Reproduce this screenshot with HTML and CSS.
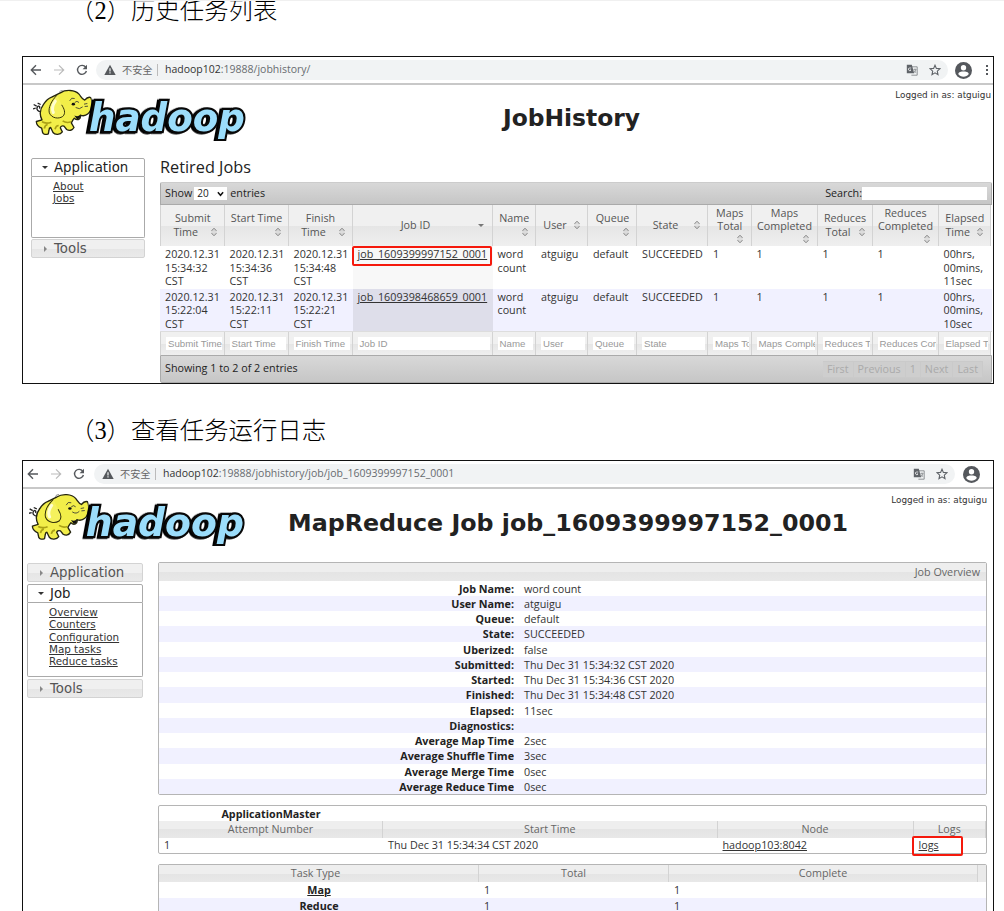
FILE: index.html
```html
<!DOCTYPE html>
<html lang="zh-CN">
<head>
<meta charset="utf-8">
<title>JobHistory</title>
<link rel="stylesheet" href="styles.css">
</head>
<body>
<svg class="defs" width="0" height="0">
  <symbol id="back" viewBox="0 0 12 12"><path d="M11 6H1.5M6 1.3L1.3 6L6 10.7" fill="none" stroke="currentColor" stroke-width="1.4"/></symbol>
  <symbol id="fwd" viewBox="0 0 12 12"><path d="M1 6h9.5M6 1.3L10.7 6L6 10.7" fill="none" stroke="currentColor" stroke-width="1.2"/></symbol>
  <symbol id="reload" viewBox="0 0 12 12"><path d="M9.7 3.2A4.5 4.5 0 1 0 10.4 7" fill="none" stroke="currentColor" stroke-width="1.4"/><path d="M11 .8v4.4H6.6z" fill="currentColor"/></symbol>
  <symbol id="warn" viewBox="0 0 12 12"><path d="M6 .8L11.7 11H.3z" fill="#55585c"/><path d="M6 4.2v3.2M6 8.3v1.3" stroke="#f1f3f4" stroke-width="1.2"/></symbol>
  <symbol id="translate" viewBox="0 0 12 12"><path d="M5 2.8h6.2v8.4H5.4" fill="#f1f3f4" stroke="#777b80" stroke-width=".8"/><path d="M.8.8h5l2.4 8.4H.8z" fill="#5f6368"/><path d="M5.2 4H3.2a1.4 1.4 0 1 0 1.8 2H3.9" fill="none" stroke="#f1f3f4" stroke-width=".8"/><path d="M7.4 5.4h3M9 4.6v.8M10 5.6C9.7 7 8.9 8 7.9 8.6M8 6.4c.4 1 1.3 1.8 2.2 2.3" fill="none" stroke="#777b80" stroke-width=".7"/></symbol>
  <symbol id="star" viewBox="0 0 12 12"><path d="M6 1.2L7.4 4.4L10.9 4.8L8.3 7.1L9 10.6L6 8.8L3 10.6L3.7 7.1L1.1 4.8L4.6 4.4z" fill="none" stroke="#5f6368" stroke-width="1.1"/></symbol>
  <symbol id="user" viewBox="0 0 16 16"><circle cx="8" cy="8" r="8" fill="#55585d"/><circle cx="8" cy="5.4" r="2.5" fill="#fff"/><path d="M3 11.4C3.3 9.3 6 8.9 8 8.9S12.700 9.300 13 11.400C11.700 13.200 10 13.900 8 13.900S4.200 13.200 3 11.400z" fill="#fff"/></symbol>
  <symbol id="sort" viewBox="0 0 8 10"><path d="M1.600 3.800L4 1.300L6.400 3.800M1.600 6.200L4 8.700L6.400 6.200" fill="none" stroke="#777" stroke-width="1"/><path d="M1.200 3.900h5.600M1.200 6.100h5.600" stroke="#aaa" stroke-width=".5"/></symbol>
  <symbol id="elephant" viewBox="39 267 176 140">
    <path d="M66 334C55 336 48 328 52 321C55 314 62 320 58 325M50 318L41 313M47 324L39 326M62 313L53 309" fill="none" stroke="#222" stroke-width="4"/>
    <path d="M117 277Q122 270 128 271" fill="none" stroke="#999" stroke-width="3"/>
    <path d="M95 291C105 285 113 282 121 278C138 267 165 269 177 282C183 289 186 297 194 300C199 294 204 289 212 292C220 306 215 333 204 341C196 348 186 347 181 345C184 357 172 363 163 354C158 360 157 363 154 368L162 382C157 391 148 393 140 388L132 378C125 376 122 379 121 383L127 395C121 404 105 405 99 397L92 382C88 383 87 386 87 390L85 401C78 404 70 403 68 398L65 384C55 380 49 371 49 364L66 359C57 342 61 325 71 312C78 301 85 295 95 291Z" fill="#f2ee49" stroke="#252510" stroke-width="4" stroke-linejoin="round"/>
    <path d="M111 285C94 302 84 323 88 338C95 355 116 357 128 349C139 339 132 325 125 314" fill="#f5f15d" stroke="#34320a" stroke-width="3"/>
    <path d="M106 303C95 319 96 329 100 337" fill="none" stroke="#fffed0" stroke-width="9" stroke-linecap="round"/>
    <path d="M149 302Q154 290 164 295M164 307Q171 300 177 307M167 322Q179 330 188 320M192 312L202 310M194 319L204 318" fill="none" stroke="#333" stroke-width="2.500"/>
    <ellipse cx="160" cy="312" rx="5" ry="4" fill="#111"/><path d="M163 346Q174 351 181 344Q181 358 171 357z" fill="#111"/>
    <path d="M66 365Q78 372 94 366M128 362Q139 370 153 365M73 385Q75 374 83 373M105 387Q108 376 116 376" fill="none" stroke="#aaa016" stroke-width="5"/>
  </symbol>
</svg>

<h2 class="caption first">（2）历史任务列表</h2>

<section class="frame one">
  <div class="toolbar">
    <svg class="i12"><use href="#back"/></svg><svg class="i12 dim"><use href="#fwd"/></svg><svg class="i12"><use href="#reload"/></svg>
    <div class="omni"><svg class="i12"><use href="#warn"/></svg><span class="unsafe">不安全</span><i class="bar"></i><span class="url"><b>hadoop102</b>:19888/jobhistory/</span><svg class="i12 tr"><use href="#translate"/></svg><svg class="i12"><use href="#star"/></svg></div>
    <svg class="i16"><use href="#user"/></svg><span class="dots"><i></i><i></i><i></i></span>
  </div>
  <header class="head">
    <svg class="logo" viewBox="39 267 642 155"><use href="#elephant" x="39" y="267" width="176" height="140"/><text x="207" y="392" textLength="468" lengthAdjust="spacingAndGlyphs">hadoop</text></svg>
    <h1>JobHistory</h1>
    <span class="login">Logged in as: atguigu</span>
  </header>
  <div class="body">
    <nav>
      <h3 class="open"><i></i>Application</h3>
      <div class="links"><a>About</a><a>Jobs</a></div>
      <h3><i></i>Tools</h3>
    </nav>
    <main>
      <h4>Retired Jobs</h4>
      <div class="tbar top"><span>Show</span><span class="select">20<svg viewBox="0 0 8 6"><path d="M1 1L4 4.500L7 1" fill="none" stroke="#111" stroke-width="1.700"/></svg></span><span>entries</span><span class="search">Search:</span><input class="q"></div>
      <div class="cols thead">
        <div>Submit<p><span>Time</span><svg><use href="#sort"/></svg></p></div>
        <div>Start Time<p><svg><use href="#sort"/></svg></p></div>
        <div>Finish<p><span>Time</span><svg><use href="#sort"/></svg></p></div>
        <div><p class="wide"><span>Job ID</span><i class="down"></i></p></div>
        <div class="n">Name<p><svg><use href="#sort"/></svg></p></div>
        <div class="one-line"><p><span>User</span><svg><use href="#sort"/></svg></p></div>
        <div>Queue<p><svg><use href="#sort"/></svg></p></div>
        <div class="one-line"><p><span>State</span><svg><use href="#sort"/></svg></p></div>
        <div class="three">Maps<br>Total<p><svg><use href="#sort"/></svg></p></div>
        <div class="three">Maps<br>Completed<p><svg><use href="#sort"/></svg></p></div>
        <div>Reduces<p><span>Total</span><svg><use href="#sort"/></svg></p></div>
        <div class="three">Reduces<br>Completed<p><svg><use href="#sort"/></svg></p></div>
        <div>Elapsed<p><span>Time</span><svg><use href="#sort"/></svg></p></div>
      </div>
      <div class="cols row">
        <div>2020.12.31<br>15:34:32<br>CST</div><div>2020.12.31<br>15:34:36<br>CST</div><div>2020.12.31<br>15:34:48<br>CST</div>
        <div class="id"><a>job_1609399997152_0001</a><em class="mark job"></em></div><div>word<br>count</div><div>atguigu</div><div>default</div><div>SUCCEEDED</div><div>1</div><div>1</div><div>1</div><div>1</div><div>00hrs,<br>00mins,<br>11sec</div>
      </div>
      <div class="cols row even">
        <div>2020.12.31<br>15:22:04<br>CST</div><div>2020.12.31<br>15:22:11<br>CST</div><div>2020.12.31<br>15:22:21<br>CST</div>
        <div class="id"><a>job_1609398468659_0001</a></div><div>word<br>count</div><div>atguigu</div><div>default</div><div>SUCCEEDED</div><div>1</div><div>1</div><div>1</div><div>1</div><div>00hrs,<br>00mins,<br>10sec</div>
      </div>
      <div class="cols tfoot">
        <div><span>Submit Time</span></div><div><span>Start Time</span></div><div><span>Finish Time</span></div><div><span>Job ID</span></div><div><span>Name</span></div><div><span>User</span></div><div><span>Queue</span></div><div><span>State</span></div><div><span>Maps Total</span></div><div><span>Maps Completed</span></div><div><span>Reduces Total</span></div><div><span>Reduces Completed</span></div><div><span>Elapsed Time</span></div>
      </div>
      <div class="tbar bottom"><span>Showing 1 to 2 of 2 entries</span><div class="pager"><span>First</span><span>Previous</span><span>1</span><span>Next</span><span>Last</span></div></div>
    </main>
  </div>
</section>

<h2 class="caption second">（3）查看任务运行日志</h2>

<section class="frame two">
  <div class="toolbar">
    <svg class="i12"><use href="#back"/></svg><svg class="i12 dim"><use href="#fwd"/></svg><svg class="i12"><use href="#reload"/></svg>
    <div class="omni"><svg class="i12"><use href="#warn"/></svg><span class="unsafe">不安全</span><i class="bar"></i><span class="url"><b>hadoop102</b>:19888/jobhistory/job/job_1609399997152_0001</span><svg class="i12 tr"><use href="#translate"/></svg><svg class="i12"><use href="#star"/></svg></div>
    <svg class="i16"><use href="#user"/></svg>
  </div>
  <header class="head">
    <svg class="logo" viewBox="39 267 642 155"><use href="#elephant" x="39" y="267" width="176" height="140"/><text x="207" y="392" textLength="468" lengthAdjust="spacingAndGlyphs">hadoop</text></svg>
    <h1>MapReduce Job job_1609399997152_0001</h1>
    <span class="login">Logged in as: atguigu</span>
  </header>
  <div class="body">
    <nav>
      <h3><i></i>Application</h3>
      <h3 class="open"><i></i>Job</h3>
      <div class="links"><a>Overview</a><a>Counters</a><a>Configuration</a><a>Map tasks</a><a>Reduce tasks</a></div>
      <h3><i></i>Tools</h3>
    </nav>
    <main>
      <div class="box info">
        <div class="bar-title">Job Overview</div>
        <dl>
          <dt>Job Name:</dt><dd>word count</dd>
          <dt>User Name:</dt><dd>atguigu</dd>
          <dt>Queue:</dt><dd>default</dd>
          <dt>State:</dt><dd>SUCCEEDED</dd>
          <dt>Uberized:</dt><dd>false</dd>
          <dt>Submitted:</dt><dd>Thu Dec 31 15:34:32 CST 2020</dd>
          <dt>Started:</dt><dd>Thu Dec 31 15:34:36 CST 2020</dd>
          <dt>Finished:</dt><dd>Thu Dec 31 15:34:48 CST 2020</dd>
          <dt>Elapsed:</dt><dd>11sec</dd>
          <dt>Diagnostics:</dt><dd></dd>
          <dt>Average Map Time</dt><dd>2sec</dd>
          <dt>Average Shuffle Time</dt><dd>3sec</dd>
          <dt>Average Merge Time</dt><dd>0sec</dd>
          <dt>Average Reduce Time</dt><dd>0sec</dd>
        </dl>
      </div>
      <div class="box am">
        <div class="g4 name"><b>ApplicationMaster</b></div>
        <div class="g4 gh"><span>Attempt Number</span><span>Start Time</span><span>Node</span><span>Logs</span></div>
        <div class="g4 gr"><span>1</span><span>Thu Dec 31 15:34:34 CST 2020</span><span><a>hadoop103:8042</a></span><span class="lg"><a>logs</a><em class="mark log"></em></span></div>
      </div>
      <div class="box tasks">
        <div class="g3 gh"><span>Task Type</span><span>Total</span><span>Complete</span></div>
        <div class="g3 gr"><b><a>Map</a></b><span>1</span><span>1</span></div>
        <div class="g3 gr even"><b><a>Reduce</a></b><span>1</span><span>1</span></div>
      </div>
    </main>
  </div>
</section>
</body>
</html>
```

FILE: styles.css
```css
* { box-sizing: border-box; }
html, body { margin: 0; height: 911px; overflow: hidden; background: #fff; }
body { font: 10.75px/13.6px "Open Sans", "Noto Sans", sans-serif; color: #333; border-top: 1px solid #f0f0f0; }
h1, h2, h3, h4, p, dl, dd { margin: 0; }
a { text-decoration: underline; }
.defs { position: absolute; }
svg { display: block; flex: none; }

.caption { font: 300 24.4px/30px "Liberation Serif", "Noto Sans CJK SC", serif; color: #000; padding-left: 70px; height: 30px; white-space: nowrap; }
.caption.first { margin-top: -5px; }
.caption.second { margin-top: 32px; }

.frame { width: 972px; margin-left: 22px; border: 1px solid #111; }
.frame.one { margin-top: 30px; height: 328px; }
.frame.two { margin-top: 14px; height: 470px; border-bottom: 0; }

/* browser toolbar */
.toolbar { display: flex; align-items: center; height: 28px; border-bottom: 2px solid #c8c8c8; padding-left: 7px; color: #55585c; }
.i12 { width: 12px; height: 12px; margin-right: 11px; }
.i16 { width: 17px; height: 17px; }
.dim { color: #bbb; }
.omni { display: flex; align-items: center; width: 852px; height: 20px; margin-left: -3px; padding-left: 8px; border-radius: 10px; background: #f1f3f4; font-size: 10.5px; }
.omni .i12 { margin-right: 6px; }
.unsafe { font-family: "Noto Sans CJK SC", sans-serif; font-size: 10.2px; color: #666; width: 32px; }
.bar { width: 1px; height: 12px; background: #bbb; margin: 0 7px 0 3px; }
.url { color: #686c70; }
.url b { font-weight: 400; color: #333; }
.omni .tr { margin-left: auto; margin-right: 11px; }
.i16 { margin-left: 8px; }
.one .i16 { margin-left: 7px; }
.dots { display: grid; gap: 2px; margin-left: 14px; }
.dots i { width: 2px; height: 2px; background: #55585c; }
.omni .i12:last-child { margin-right: 7px; }
.two .toolbar { padding-left: 4px; }
.two .omni { width: 861px; margin-left: -2px; }

/* page header */
.head { display: flex; align-items: flex-start; height: 73px; }
.logo { width: 214px; height: 52px; margin: 4px 0 0 10px; }
.logo text { font: italic bold 117px "DejaVu Sans", sans-serif; fill: #9bddfb; stroke: #080808; stroke-width: 13px; paint-order: stroke; stroke-linejoin: miter; filter: drop-shadow(-6px 2px 0 #000); }
h1 { font: bold 23.400px/30px "DejaVu Sans", sans-serif; color: #222; white-space: nowrap; margin-top: 18px; }
.one h1 { margin-left: 256px; }
.two h1 { margin: 19px 0 0 42px; font-size: 23.750px; }
.login { font: 8.850px/12px "DejaVu Sans", sans-serif; margin: 4px 2px 0 auto; white-space: nowrap; }
.two .head { height: 73px; }
.two .logo { width: 217px; height: 53px; margin-left: 6px; }
.two .login { margin: 5px 6px 0 auto; }

.body { display: flex; }
nav { width: 114px; margin-left: 8px; font-family: "DejaVu Sans", sans-serif; }
nav h3 { display: flex; align-items: center; height: 19px; font: 13.300px/17px "DejaVu Sans", sans-serif; color: #555; border: 1px solid #d3d3d3; border-radius: 2px; background: linear-gradient(#f0f0f0 50%, #e5e5e5 50%, #eaeaea); }
nav h3 i { width: 0; height: 0; border: 3px solid transparent; border-left-color: #888; border-right: 0; margin: 0 7px 0 12px; }
nav h3.open { background: #fff; color: #222; border-color: #aaa; border-radius: 2px 2px 0 0; }
nav h3.open i { border: 3px solid transparent; border-top: 3.500px solid #333; border-bottom: 0; margin: 0 6px 0 10px; }
.links { display: grid; align-content: start; padding: 3px 0 0 21px; border: 1px solid #aaa; border-top: 0; border-radius: 0 0 2px 2px; font-size: 10.350px; line-height: 12.300px; margin-bottom: 1px; }
.one .links { height: 61px; }
.two .links { height: 74px; margin-bottom: 2px; }
.two nav { width: 116px; margin-left: 4px; padding-top: 1px; }
.two nav h3 { margin-bottom: 2px; }
.two nav h3.open { margin: 1px 0 0; }

/* jobs table */
.one main { width: 832px; margin-left: 15px; }
h4 { font: 16.300px/18px "Open Sans", sans-serif; color: #222; height: 24px; }
.tbar { display: flex; align-items: center; border: 1px solid #aaa; background: linear-gradient(#d8d8d8, #c6c6c6); color: #222; padding: 0 4px; }
.tbar.top { height: 23px; border-radius: 2px 2px 0 0; border-top-color: #ccc; }
.tbar.bottom { height: 28px; border-radius: 0 0 2px 2px; }
.select { display: flex; align-items: center; justify-content: space-between; width: 33px; height: 13px; margin: 0 3px 0 2px; padding: 0 3px; background: #fff; font-size: 10px; }
.select svg { width: 7px; height: 6px; }
.search { margin-left: auto; }
.q { width: 125px; height: 13px; border: 0; padding: 0; background: #fff; }
.cols { display: grid; grid-template-columns: 64.500px 64px 64px 140px 43.500px 52px 49px 71px 43.500px 66px 55px 66px 52.500px; }
.thead { height: 41px; color: #555; }
.thead > div, .tfoot > div { border-right: 1px solid #d3d3d3; background: linear-gradient(#f0f0f0 50%, #e5e5e5 50%, #efefef); min-width: 0; }
.thead > div:first-child, .tfoot > div:first-child { border-left: 1px solid #d3d3d3; }
.thead > div { display: grid; align-content: center; text-align: center; padding-left: 1px; line-height: 13.400px; }
.thead p { display: flex; align-items: center; justify-content: flex-end; padding-right: 6px; height: 13.400px; }
.thead p span { flex: 1; }
.thead svg { width: 8px; height: 10px; }
.thead .three p { height: 11px; padding-right: 7px; }
.down { border: 3px solid transparent; border-top-color: #777; border-bottom: 0; }
.wide { padding-right: 8px !important; }
.row { height: 42.500px; }
.row > div { padding: 2px 0 0 5px; white-space: nowrap; }
.row.even, .even { background: #f1f1ff; }
.id { background: #f8f8f8; position: relative; }
.even .id { background: #dedeea; }
.mark { position: absolute; border: 2px solid #f5190c; border-radius: 2px; }
.mark.job { left: -1px; top: 0; width: 140px; height: 20px; }
.tfoot { height: 24px; border-top: 1px solid #ddd; }
.tfoot > div { padding: 5px 2px 0 5px; }
.tfoot span { display: block; overflow: hidden; white-space: nowrap; height: 13px; padding-left: 2px; background: #fff; color: #999; font: 9.700px/13px "Liberation Sans", sans-serif; }
.pager { display: flex; margin-left: auto; margin-right: 4px; color: #aaa; }
.pager span { padding: 1px 4px; height: 17px; border: 1px solid #cacaca; border-left-width: 0; background: #cecece; }

/* job detail */
.two main { width: 829px; margin-left: 15px; }
.box { border: 1px solid #b5b5b5; border-radius: 2px; margin-bottom: 10px; }
.bar-title { height: 17.500px; line-height: 19px; text-align: right; padding-right: 6px; color: #666; background: linear-gradient(#eee 50%, #e4e4e4 50%, #e8e8e8); }
dl { display: grid; grid-template-columns: 355px 1fr; grid-auto-rows: 15.280px; line-height: 16px; }
dt { text-align: right; font-weight: 700; color: #222; }
dd { padding-left: 10px; }
dt:nth-of-type(even), dd:nth-of-type(even) { background: #f1f1ff; }
.g4 { display: grid; grid-template-columns: 224px 334.500px 196px 1fr; }
.g3 { display: grid; grid-template-columns: 320px 190px 1fr; }
.gh { height: 16px; line-height: 17px; color: #666; text-align: center; }
.gh span { border-right: 1px solid #d3d3d3; background: linear-gradient(#eee 50%, #e4e4e4 50%, #e8e8e8); }
.name { height: 15px; line-height: 16px; text-align: center; color: #222; }
.gr { height: 15.300px; line-height: 16px; }
.am .gr { height: 16px; line-height: 17px; }
.tasks .gh { height: 17px; padding-right: 8px; background: #eaeaea; }
.tasks .gh span:first-child { padding-right: 6px; }
.gr > span { padding-left: 5px; }
.g3 > span { padding-left: 5px; }
.gh > span { padding-left: 0; }
.gr > b { text-align: center; color: #222; }
.lg { position: relative; }
.mark.log { left: -2px; top: -1px; width: 51px; height: 20px; }
```
